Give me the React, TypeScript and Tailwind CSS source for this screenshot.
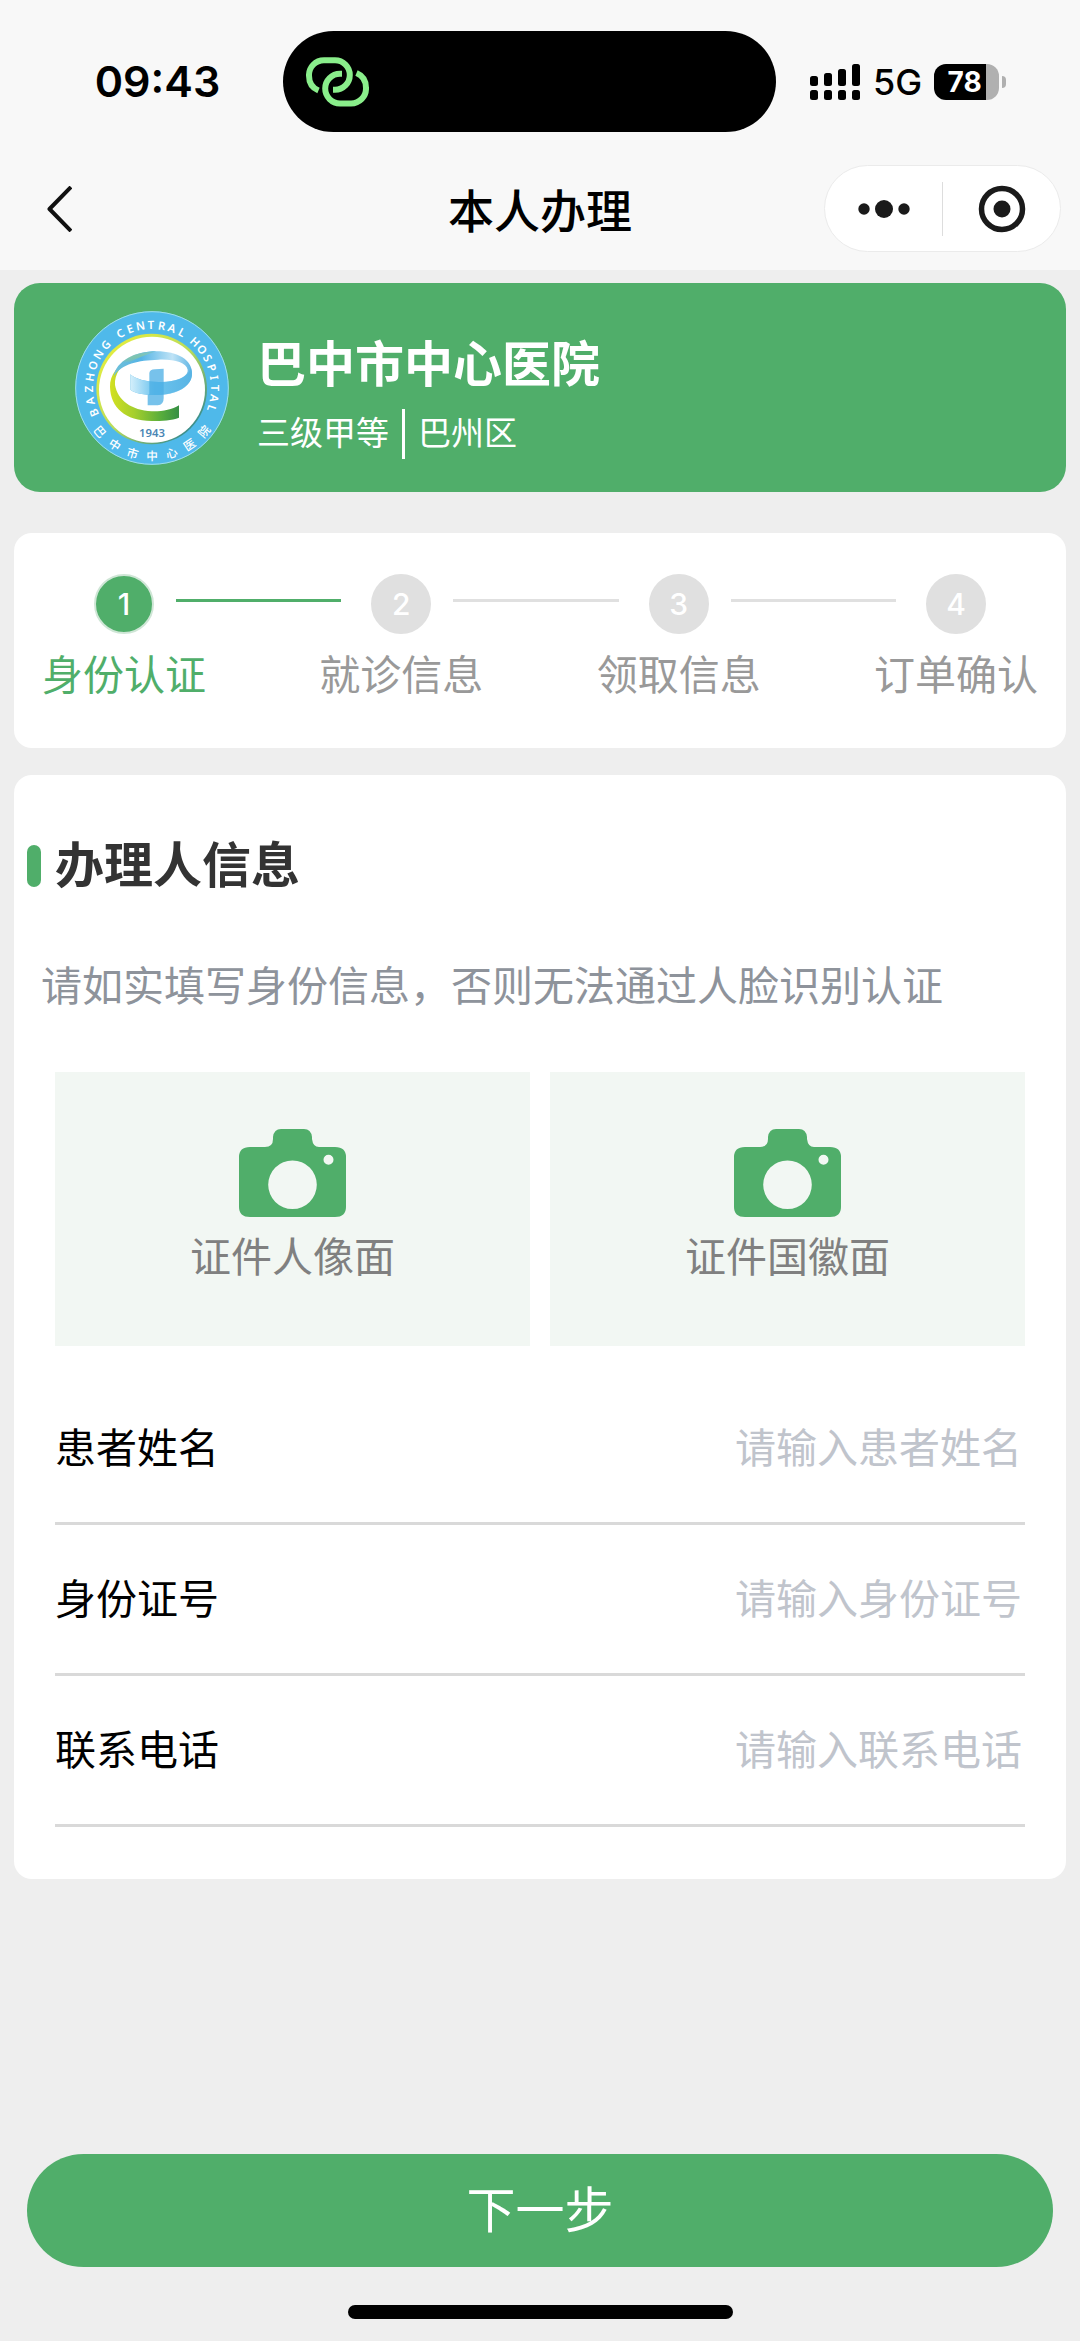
import React from 'react';

const steps = ['身份认证', '就诊信息', '领取信息', '订单确认'];

const uploads = ['证件人像面', '证件国徽面'];

const fields = [
  { id: 'name', label: '患者姓名', placeholder: '请输入患者姓名', type: 'text' },
  { id: 'idNo', label: '身份证号', placeholder: '请输入身份证号', type: 'text' },
  { id: 'phone', label: '联系电话', placeholder: '请输入联系电话', type: 'tel' },
];

// Words on the badge ring: start angle and step in degrees, 0 is the top
const badgeWords = [
  { text: 'BAZHONG', start: -113, step: 11 },
  { text: 'CENTRAL', start: -30, step: 9.7 },
  { text: 'HOSPITAL', start: 43, step: 9.4 },
];

const HospitalBadge = () => (
  <svg viewBox="0 0 462 462" className="size-[154px] shrink-0" role="img" aria-label="巴中市中心医院">
    <defs>
      <linearGradient id="rim" x1="0" y1="0" x2="1" y2="1">
        <stop offset="0.1" stopColor="#e6ee3c" />
        <stop offset="0.5" stopColor="#b9dc5a" />
        <stop offset="0.85" stopColor="#3d8f8a" />
      </linearGradient>
      <linearGradient id="leaf" x1="0" y1="0" x2="1" y2="0">
        <stop offset="0" stopColor="#d3e021" />
        <stop offset="0.35" stopColor="#a5cf2c" />
        <stop offset="0.75" stopColor="#56ac3c" />
        <stop offset="1" stopColor="#368f45" />
      </linearGradient>
      <linearGradient id="leafTop" x1="0" y1="0" x2="0" y2="1">
        <stop offset="0" stopColor="#6dbfdc" />
        <stop offset="0.45" stopColor="#d3e021" stopOpacity="0" />
      </linearGradient>
      <linearGradient id="sky" x1="0" y1="0" x2="1" y2="0">
        <stop offset="0" stopColor="#6fc0d8" />
        <stop offset="0.35" stopColor="#55b4e6" />
        <stop offset="0.75" stopColor="#bfe3f6" />
        <stop offset="1" stopColor="#5fb5e4" />
      </linearGradient>
      <linearGradient id="band" x1="0" y1="0" x2="1" y2="0">
        <stop offset="0" stopColor="#d4effb" />
        <stop offset="0.4" stopColor="#6cc3ee" />
        <stop offset="1" stopColor="#58b4e4" />
      </linearGradient>
    </defs>
    <circle cx="231" cy="231" r="230" fill="#4fb9ea" />
    <circle cx="231" cy="231" r="229" fill="none" stroke="#9fe0e6" strokeWidth="3" />
    <circle cx="230" cy="234" r="166" fill="url(#rim)" />
    <circle cx="231" cy="236" r="159" fill="#fff" />
    <g fill="#fff" textAnchor="middle" fontFamily="'Noto Sans', sans-serif" fontSize="34" fontWeight="600">
      {badgeWords.map((word) =>
        word.text.split('').map((char, i) => (
          <text key={word.text + i} x="231" y="54" transform={`rotate(${word.start + i * word.step} 231 231)`}>
            {char}
          </text>
        ))
      )}
    </g>
    <g fill="#fff" textAnchor="middle" fontFamily="'Noto Sans CJK SC', sans-serif" fontSize="35" fontWeight="500">
      {'巴中市中心医院'.split('').map((char, i) => (
        <text key={i} x="231" y="448" transform={`rotate(${50 - i * 16.7} 231 231)`}>
          {char}
        </text>
      ))}
    </g>
    <path
      d="M170 144C128 160 104 192 105 228C107 290 150 329 230 330C262 330 290 328 312 320V283C290 296 262 302 230 301C170 298 128 268 120 222C118 190 138 160 170 144Z"
      fill="url(#leaf)"
    />
    <path
      d="M116 196C124 150 180 121 244 121C310 121 351 148 351 186C351 228 306 252 244 252C206 252 178 246 166 236V190C184 208 230 216 274 212C318 208 340 192 338 176C334 154 296 144 250 146C190 148 140 158 116 196Z"
      fill="url(#sky)"
    />
    <path d="M116 196C124 150 180 121 244 121C190 140 140 158 116 196Z" fill="url(#leafTop)" />
    <path
      d="M166 190C184 208 230 216 274 212C318 208 342 192 347 170C354 186 352 206 338 220C318 242 284 252 244 252C206 252 178 246 166 236Z"
      fill="url(#band)"
    />
    <path d="M223 186Q224 176 240 175L266 173V262Q266 282 248 283L218 283V252L223 250Z" fill="#4aaee4" fillOpacity="0.75" />
    <text
      x="231"
      y="377"
      textAnchor="middle"
      fill="#4a86b4"
      fontFamily="'Noto Sans', sans-serif"
      fontSize="34"
      fontWeight="600"
    >
      1943
    </text>
  </svg>
);

const LinkIcon = () => (
  <svg width="63" height="50" viewBox="0 0 63 50" fill="none" stroke="#8aee8b" strokeWidth="6">
    <path d="M12.5 33.5C6.500 31 3 25.500 3 18.700A15 15 0 0 1 18 3.200H29A14.700 14.700 0 0 1 29 32.800H27" />
    <path
      d="M12.5 33.5C6.500 31 3 25.500 3 18.700A15 15 0 0 1 18 3.200H29A14.700 14.700 0 0 1 29 32.800H27"
      transform="rotate(180 31.5 24.800)"
    />
  </svg>
);

const SignalIcon = () => (
  <svg width="50" height="36" viewBox="0 0 50 36">
    {[12, 9, 5, 0].map((top, i) => (
      <g key={top}>
        <rect x={i * 14} y={top} width="8" height={22 - top} rx="2.5" />
        <rect x={i * 14} y="26" width="8" height="10" rx="2.5" />
      </g>
    ))}
  </svg>
);

const CameraIcon = () => (
  <svg width="107" height="88" viewBox="0 0 107 88" fill="#50ae6a">
    <path
      fillRule="evenodd"
      d="M42 0H65Q72 0 73 8V10Q74 18 80 18H96Q107 18 107 28V78Q107 88 96 88H11Q0 88 0 78V28Q0 18 11 18H26Q34 18 34 10V8Q35 0 42 0ZM53.500 31.500A24.300 24.300 0 1 0 53.500 80.100A24.300 24.300 0 1 0 53.500 31.500ZM89.500 25.800A5 5 0 1 0 89.500 35.800A5 5 0 1 0 89.500 25.800Z"
    />
  </svg>
);

const App: React.FC = () => {
  return (
    <div className="flex min-h-screen flex-col bg-[#eeeeee] font-['Inter','Noto_Sans_CJK_SC',sans-serif] text-black">
      <header className="bg-[#f8f8f8] pt-[31px] pb-[18px]">
        {/* Status bar */}
        <div className="grid grid-cols-[283fr_493fr_304fr] items-center">
          <div className="pl-8 text-center text-[43px] leading-none font-semibold">09:43</div>
          <div className="flex h-[101px] items-center rounded-full bg-black pl-[23px]">
            <LinkIcon />
          </div>
          <div className="flex items-center pl-[34px]">
            <SignalIcon />
            <span className="ml-[13px] text-[36px] leading-none font-medium">5G</span>
            <div className="ml-[12px] flex h-9 w-[65px] items-center justify-center rounded-xl bg-linear-to-r from-black from-80% to-[#b0b0b0] to-80% pr-1 text-[28px] leading-none font-bold text-white">
              78
            </div>
            <div className="ml-[3px] h-3 w-1 rounded-r-full bg-[#b0b0b0]" />
          </div>
        </div>

        {/* Navigation */}
        <div className="mt-[33px] grid grid-cols-[1fr_auto_1fr] items-center pr-[19px] pl-[46px]">
          <button type="button" aria-label="返回" className="justify-self-start">
            <svg width="26" height="46" viewBox="0 0 26 46" fill="none" stroke="#111" strokeWidth="4">
              <path d="M25 1L3.500 23L25 45" strokeLinejoin="round" />
            </svg>
          </button>
          <h1 className="pt-1 pr-[27px] text-[46px] leading-none font-medium">本人办理</h1>
          <div className="flex h-[87px] w-[237px] items-center justify-self-end rounded-full border border-[#ebebeb] bg-white">
            <button type="button" aria-label="更多" className="flex flex-1 justify-center">
              <svg width="52" height="18" viewBox="0 0 52 18" fill="#1a1a1a">
                <circle cx="6" cy="9" r="5.700" />
                <circle cx="26" cy="9" r="9" />
                <circle cx="46" cy="9" r="5.700" />
              </svg>
            </button>
            <div className="h-[54px] w-px bg-[#dddddd]" />
            <button type="button" aria-label="关闭" className="flex flex-1 justify-center">
              <svg width="48" height="48" viewBox="0 0 48 48" fill="none">
                <circle cx="24" cy="24" r="20.500" stroke="#1a1a1a" strokeWidth="5.500" />
                <circle cx="24" cy="24" r="8.500" fill="#1a1a1a" />
              </svg>
            </button>
          </div>
        </div>
      </header>

      <main className="px-[14px] pt-[13px]">
        {/* Hospital */}
        <section className="flex h-[209px] items-center rounded-[26px] bg-[#50ae6a] pl-[61px] text-white">
          <HospitalBadge />
          <div className="ml-7 pt-5">
            <h2 className="text-[49px] leading-[56px] font-bold">巴中市中心医院</h2>
            <div className="mt-4 flex items-center text-[33px] leading-none">
              <span>三级甲等</span>
              <span className="mx-[13px] h-[50px] w-[3px] bg-white" />
              <span>巴州区</span>
            </div>
          </div>
        </section>

        {/* Steps */}
        <ol className="mt-[41px] flex h-[215px] items-start rounded-[18px] bg-white px-[28px] pt-[41px]">
          {steps.map((step, i) => (
            <React.Fragment key={step}>
              {i > 0 && (
                <li
                  aria-hidden="true"
                  className={`mt-[25px] -mr-[22px] -ml-[30px] h-[3px] flex-1 ${i === 1 ? 'bg-[#50ae6a]' : 'bg-[#e0e0e0]'}`}
                />
              )}
              <li className={`flex flex-col items-center ${i === 0 ? 'text-[#50ae6a]' : 'text-[#999999]'}`}>
                <span
                  className={`flex size-[60px] items-center justify-center rounded-full border-2 text-[30px] leading-none font-medium text-white ${
                    i === 0 ? 'border-[#cfe6d6] bg-[#50ae6a]' : 'border-[#e0e0e0] bg-[#e0e0e0]'
                  }`}
                >
                  {i + 1}
                </span>
                <span className="mt-4 text-[41px] leading-[50px]">{step}</span>
              </li>
            </React.Fragment>
          ))}
        </ol>

        {/* Applicant form */}
        <form className="mt-[27px] rounded-[18px] bg-white px-[41px] pt-[62px] pb-[52px]">
          <div className="-ml-[28px] flex items-center">
            <span className="h-[42px] w-[14px] rounded-full bg-[#50ae6a]" />
            <h2 className="ml-[14px] text-[49px] leading-[58px] font-bold text-[#333333]">办理人信息</h2>
          </div>
          <p className="-ml-[14px] mt-[66px] text-[41px] leading-[50px] text-[#8e939b]">
            请如实填写身份信息，否则无法通过人脸识别认证
          </p>

          <div className="mt-[61px] grid grid-cols-2 gap-5">
            {uploads.map((label) => (
              <button
                key={label}
                type="button"
                className="flex h-[274px] flex-col items-center bg-[#f2f7f3] pt-[57px] text-[41px] leading-[50px] text-[#808080]"
              >
                <CameraIcon />
                <span className="mt-[15px]">{label}</span>
              </button>
            ))}
          </div>

          <div className="mt-7">
            {fields.map((field) => (
              <div key={field.id} className="flex h-[151px] items-center border-b-3 border-[#d9d9d9] pr-[3px] text-[41px] leading-[50px]">
                <label htmlFor={field.id} className="shrink-0">
                  {field.label}
                </label>
                <input
                  id={field.id}
                  type={field.type}
                  placeholder={field.placeholder}
                  className="min-w-0 flex-1 bg-transparent text-right outline-none placeholder:text-[#c0c4cc]"
                />
              </div>
            ))}
          </div>
        </form>
      </main>

      <footer className="mt-auto flex flex-col items-center px-[27px] pb-[22px]">
        <button type="button" className="h-[113px] w-full rounded-full bg-[#50ae6a] text-[49px] leading-none text-white">
          下一步
        </button>
        <div className="mt-[38px] h-[14px] w-[385px] rounded-full bg-black" />
      </footer>
    </div>
  );
};

export default App;
